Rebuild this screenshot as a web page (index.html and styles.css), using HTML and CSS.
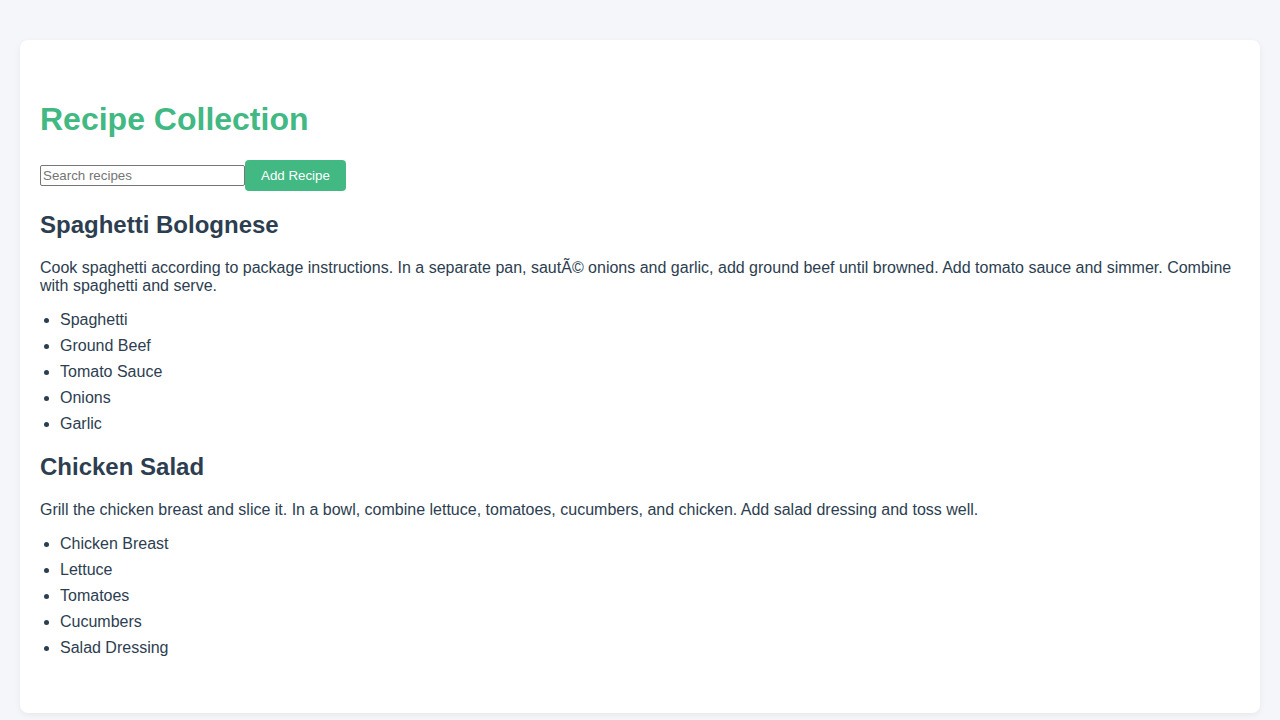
FILE: index.html
```html
<!DOCTYPE html>
<html lang="en">
<head>
<meta charset="utf-8">
<title>Recipe Collection</title>
<link rel="stylesheet" href="styles.css">
</head>
<body>
<div class="card">
  <h1 class="title">Recipe Collection</h1>
  <div class="toolbar">
    <input class="search" type="text" placeholder="Search recipes">
    <button class="add-btn">Add Recipe</button>
  </div>
  <div class="recipe">
    <h2 class="recipe-name">Spaghetti Bolognese</h2>
    <p class="recipe-text">Cook spaghetti according to package instructions. In a separate pan, sautÃ© onions and garlic, add ground beef until browned. Add tomato sauce and simmer. Combine with spaghetti and serve.</p>
    <ul class="ingredients">
      <li>Spaghetti</li>
      <li>Ground Beef</li>
      <li>Tomato Sauce</li>
      <li>Onions</li>
      <li>Garlic</li>
    </ul>
  </div>
  <div class="recipe">
    <h2 class="recipe-name">Chicken Salad</h2>
    <p class="recipe-text">Grill the chicken breast and slice it. In a bowl, combine lettuce, tomatoes, cucumbers, and chicken. Add salad dressing and toss well.</p>
    <ul class="ingredients">
      <li>Chicken Breast</li>
      <li>Lettuce</li>
      <li>Tomatoes</li>
      <li>Cucumbers</li>
      <li>Salad Dressing</li>
    </ul>
  </div>
</div>
</body>
</html>
```
FILE: styles.css
```css
html, body {
  margin: 0;
  padding: 0;
}
body {
  background: #f5f6fa;
  font-family: "Liberation Sans", Arial, sans-serif;
  color: #2c3e50;
  padding: 40px 20px;
}
.card {
  background: #ffffff;
  border-radius: 8px;
  box-shadow: 0 2px 6px rgba(0, 0, 0, 0.06);
  padding: 40px 20px 40px;
  display: flow-root;
}
.title {
  color: #42b883;
  font-size: 32px;
  font-weight: bold;
  margin: 21px 0 22px;
}
.toolbar {
  display: flex;
  align-items: center;
}
.search {
  box-sizing: border-box;
  width: 205px;
  height: 21px;
  font-family: "Liberation Sans", Arial, sans-serif;
  font-size: 13.333px;
  padding: 1px 2px;
  border: 1px solid #767676;
  border-radius: 2px;
  margin: 0;
}
.search::placeholder {
  color: #757575;
}
.add-btn {
  background: #42b883;
  color: #ffffff;
  border: none;
  border-radius: 4px;
  font-family: "Liberation Sans", Arial, sans-serif;
  font-size: 13.333px;
  padding: 8px 16px;
  height: 31px;
  margin: 0;
}
.recipe-name {
  font-size: 24px;
  margin: 20px 0;
}
.recipe-text {
  font-size: 16px;
  margin: 16px 0;
}
.ingredients {
  margin: 16px 0;
  padding-left: 20px;
}
.ingredients li {
  margin-bottom: 8px;
}
```
